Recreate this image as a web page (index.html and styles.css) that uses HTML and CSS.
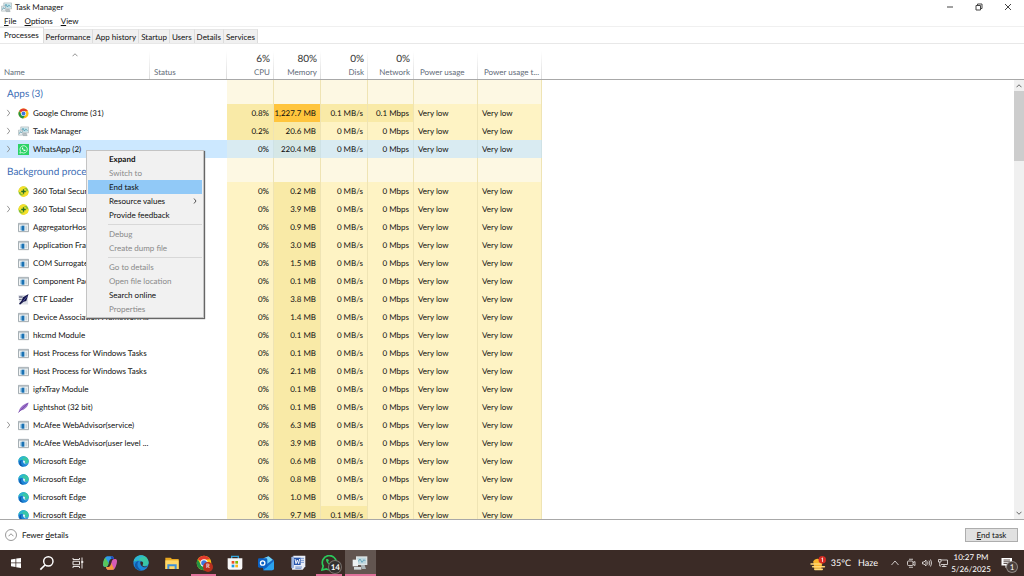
FILE: index.html
```
<!DOCTYPE html>
<html lang="en">
<head>
<meta charset="UTF-8">
<meta name="viewport" content="width=device-width, initial-scale=1.0">
<title>Task Manager</title>
<link rel="stylesheet" href="styles.css">
</head>
<body>

<!-- shared icons -->
<svg class="sprite" aria-hidden="true">
  <symbol id="chrome" viewBox="0 0 24 24">
    <circle cx="12" cy="12" r="11" fill="#fbc116"/>
    <path d="M12 12 2.5 6.500A11 11 0 0 1 21.500 6.500L12 7z" fill="#e33b2e"/>
    <path d="M2.500 6.500A11 11 0 0 0 11 23l5.500-8.500L12 12 7 14z" fill="#229342"/>
    <circle cx="12" cy="12" r="5.500" fill="#fff"/>
    <circle cx="12" cy="12" r="4.200" fill="#3c78e0"/>
  </symbol>
  <symbol id="taskmgr" viewBox="0 0 24 24">
    <path d="M6 2h17v13H6z" fill="#dfe9ec" stroke="#8b999e"/>
    <path d="M8 4h13v9H8z" fill="#c3e3ea"/>
    <path d="M8 10l3-5 3 6 3-4 4 3" fill="none" stroke="#3f8fa8" stroke-width="1.500"/>
    <path d="M1 9h9v11H1z" fill="#e9eef0" stroke="#8b999e"/>
    <path d="M3 17l2-5 2 3 2-3" fill="none" stroke="#4f95aa" stroke-width="1.500"/>
    <path d="M12 16h6l2 5h-9z" fill="#b7c1c4" stroke="#8b999e"/>
  </symbol>
  <symbol id="monitors" viewBox="0 0 24 24">
    <path d="M6 2h17v13H6z" fill="#dde3e5"/>
    <path d="M8 4h13v9H8z" fill="#bcd6de"/>
    <path d="M9 10l3-4 3 5 3-4 2 2" fill="none" stroke="#5b9fb5" stroke-width="1.300"/>
    <path d="M1 7h8v10H1z" fill="#eef1f2"/>
    <path d="M3 18h11v4H3z" fill="#d5dadc"/>
    <path d="M13 15h6l2 6h-6z" fill="#aab3b6"/>
  </symbol>
  <symbol id="wa" viewBox="0 0 24 24">
    <path d="M0 0h24v24H0z" fill="#2bd366"/>
    <path d="M4 20l1.300-4.400a8 8 0 1 1 3.100 3.100z" fill="none" stroke="#fff" stroke-width="1.600"/>
    <path d="M9 7.500c-2 2 3.500 9 7 7.500l.5-2-2.200-1.200-1.200 1.200c-1-.3-2-1.500-2.400-2.400l1-1.200L10.500 7.500z" fill="#fff"/>
  </symbol>
  <symbol id="s360" viewBox="0 0 24 24">
    <circle cx="12" cy="12" r="11" fill="#8cc22f"/>
    <path d="M2 7A11 11 0 0 1 20 4c-6-1-8 2-9 5s-5 5-10 4q0-3 1-6zM23 11a11 11 0 0 1-19 9c7 2 10-1 11-4s4-5 8-5z" fill="#f6e02a"/>
    <circle cx="12" cy="12" r="6.500" fill="#f6e02a"/>
    <path d="M10.500 7h3v3.500H17v3h-3.500V17h-3v-3.500H7v-3h3.500z" fill="#23702a"/>
  </symbol>
  <symbol id="app" viewBox="0 0 24 20">
    <path d="M1 1h22v18H1z" fill="#f2f5f6" stroke="#9aa3a8" stroke-width="2"/>
    <path d="M2 2h20v3H2z" fill="#c3ccd1"/>
    <path d="M5 7h4v9H5z" fill="#8cbfe0"/>
    <path d="M8 6h6v11H8z" fill="#1971b3"/>
    <path d="M16 7h4v9h-4z" fill="#c9d6dc"/>
  </symbol>
  <symbol id="ctf" viewBox="0 0 24 24">
    <path d="M1 2h17l4 4v17H3z" fill="#dcdfe6"/>
    <path d="M2 5h8v3H2zM2 11h6v2H2z" fill="#70748c"/>
    <path d="M23 0l-5 15-6 2-7 6-3-1 6-8 3-7z" fill="#15164a"/>
    <path d="M20 5l-9 11" stroke="#6d72c4" stroke-width="1.500"/>
  </symbol>
  <symbol id="feather" viewBox="0 0 24 24">
    <path d="M1 23C3 13 10 5 23 1c-1 9-8 16-18 18z" fill="#9a70c8"/>
    <path d="M1 23L21 3" stroke="#6a3fa0" stroke-width="1.500"/>
  </symbol>
  <symbol id="edge" viewBox="0 0 24 24">
    <circle cx="12" cy="12" r="11.500" fill="#1b86d8"/>
    <path d="M1 10C3-3 22-3 23.500 11c0 5-4 6-8 5.500-2-.5-1.500-1.500-.7-2.500C16 9 10 6 1 10z" fill="#3ac7a5"/>
    <path d="M1 10C3 1 13-1 18 3c-6-1-9 1-9 5-3-1-6 0-8 2z" fill="#2cb4d8"/>
    <path d="M9 9c-4 3-3 11 4 14-6 1-11-4-10-9 1-3 3-5 6-5z" fill="#125ba9"/>
    <path d="M11 10c4-1 5 2 3.800 4-1 1.500-.5 2.500 1.200 3 2 .5 4 .3 6-1-4 5-12 1-11-6z" fill="var(--gap, #eef9fb)"/>
  </symbol>
  <symbol id="right" viewBox="0 0 8 12">
    <path d="M2 1l4 5-4 5" fill="none" stroke="currentColor" stroke-width="1.400"/>
  </symbol>
  <symbol id="up" viewBox="0 0 12 8">
    <path d="M1 6.500l5-5 5 5" fill="none" stroke="currentColor" stroke-width="1.600"/>
  </symbol>
</svg>

<main class="window">
  <header class="titlebar">
    <svg class="title-icon"><use href="#taskmgr"/></svg>
    <h1>Task Manager</h1>
    <div class="window-buttons">
      <button aria-label="Minimize"><svg viewBox="0 0 8 8"><path d="M1 4h6"/></svg></button>
      <button aria-label="Restore"><svg viewBox="0 0 8 8"><path d="M1 2.500h4.500V7H1zM2.500 2.500V1H7v4.500H5.500"/></svg></button>
      <button aria-label="Close"><svg viewBox="0 0 8 8"><path d="M1 1l6 6M7 1L1 7"/></svg></button>
    </div>
  </header>

  <nav class="menubar">
    <button><u>F</u>ile</button>
    <button><u>O</u>ptions</button>
    <button><u>V</u>iew</button>
  </nav>

  <div class="tabs" role="tablist">
    <button class="tab active" role="tab" aria-selected="true">Processes</button>
    <button class="tab" role="tab">Performance</button>
    <button class="tab" role="tab">App history</button>
    <button class="tab" role="tab">Startup</button>
    <button class="tab" role="tab">Users</button>
    <button class="tab" role="tab">Details</button>
    <button class="tab" role="tab">Services</button>
  </div>

  <section class="content">
    <div class="table-area">
      <table>
        <colgroup>
          <col class="c-name"><col class="c-status">
          <col class="c-num"><col class="c-num"><col class="c-num"><col class="c-net">
          <col class="c-power"><col class="c-power"><col>
        </colgroup>
        <thead>
          <tr>
            <th class="name-head"><svg class="sort"><use href="#up"/></svg>Name</th>
            <th>Status</th>
            <th class="num"><b>6%</b>CPU</th>
            <th class="num"><b>80%</b>Memory</th>
            <th class="num"><b>0%</b>Disk</th>
            <th class="num"><b>0%</b>Network</th>
            <th class="power">Power usage</th>
            <th class="power">Power usage t...</th>
            <th class="rest"></th>
          </tr>
        </thead>
        <tbody id="rows"></tbody>
      </table>
    </div>
    <div class="scrollbar">
      <button aria-label="Scroll up"><svg><use href="#up"/></svg></button>
      <div class="thumb"></div>
      <button class="down" aria-label="Scroll down"><svg><use href="#up"/></svg></button>
    </div>
  </section>

  <footer class="footer">
    <button class="fewer"><span class="round"><svg><use href="#up"/></svg></span><span>Fewer <u>d</u>etails</span></button>
    <button class="end-task"><u>E</u>nd task</button>
  </footer>

  <div class="context-menu" role="menu">
    <button role="menuitem" class="default">Expand</button>
    <button role="menuitem" disabled>Switch to</button>
    <button role="menuitem" class="hover">End task</button>
    <button role="menuitem">Resource values<svg><use href="#right"/></svg></button>
    <button role="menuitem">Provide feedback</button>
    <hr>
    <button role="menuitem" disabled>Debug</button>
    <button role="menuitem" disabled>Create dump file</button>
    <hr>
    <button role="menuitem" disabled>Go to details</button>
    <button role="menuitem" disabled>Open file location</button>
    <button role="menuitem">Search online</button>
    <button role="menuitem" disabled>Properties</button>
  </div>
</main>

<div class="taskbar">
  <div class="system">
    <button aria-label="Start"><svg viewBox="0 0 24 24"><path d="M2 5l9-1.500V11H2zM12.500 3.200L22 2v9h-9.500zM2 12.500h9V20l-9-1.500zM12.500 12.500H22V22l-9.500-1.300z" fill="#fff"/></svg></button>
    <button aria-label="Search"><svg class="big" viewBox="0 0 24 24"><circle cx="14" cy="9.500" r="7" fill="none" stroke="#fff" stroke-width="2.200"/><path d="M9 15l-7 7" stroke="#fff" stroke-width="2.500"/></svg></button>
    <button aria-label="Task view"><svg viewBox="0 0 24 24" fill="none" stroke="#e8e4e2" stroke-width="2"><path d="M2 2v3h13V2M2 22v-3h13v3M2 8.500h13v7H2zM20 1v22"/><path d="M18.500 10h4" stroke-width="4"/></svg></button>
  </div>
  <div class="pinned">
    <button aria-label="Copilot"><svg class="big" viewBox="0 0 24 24">
      <path d="M8 2h7c2 0 2.500 2 3 4h-4c-2 0-3 2-4 6s-2 6-5 6c-4 0-4-3-3-7 2-6 3-9 6-9z" fill="#2f9be8"/>
      <path d="M2 11c0-3 2-6 3-7l5 8c-1 4-2 6-5 6-3 0-4-3-3-7z" fill="#58c65b"/>
      <path d="M16 22H9c-2 0-2.500-2-3-4h4c2 0 3-2 4-6s2-6 5-6c4 0 4 3 3 7-2 6-3 9-6 9z" fill="#d65bb5"/>
      <path d="M6 18h4c2 0 3-2 4-6l4 9c-1 1-2 1-3 1H9c-2 0-2.500-2-3-4z" fill="#f49a3c"/>
      <path d="M13 2h2c2 0 2.500 2 3 4h-4z" fill="#2445b8"/></svg></button>
    <button class="edge-pin" aria-label="Microsoft Edge"><svg class="big"><use href="#edge"/></svg></button>
    <button aria-label="File Explorer"><svg class="big" viewBox="0 0 24 24"><path d="M2 4h8l2 2h10v15H2z" fill="#e9a820"/><path d="M2 8h20v13H2z" fill="#ffd868"/><path d="M5 14h14v7h-3v-4H8v4H5z" fill="#3f90d8"/></svg></button>
    <button class="running" aria-label="Google Chrome"><svg class="big"><use href="#chrome"/></svg><span class="badge profile">R</span></button>
    <button aria-label="Microsoft Store"><svg class="big" viewBox="0 0 24 24"><path d="M7 6V2h10v4" fill="none" stroke="#35a6dc" stroke-width="2"/><path d="M1 5h22v14a3 3 0 0 1-3 3H4a3 3 0 0 1-3-3z" fill="#f7f7f7"/><path d="M7 9h4v4H7z" fill="#f05022"/><path d="M12.500 9h4v4h-4z" fill="#7fba00"/><path d="M7 14.500h4v4H7z" fill="#1b9de2"/><path d="M12.500 14.500h4v4h-4z" fill="#fdb813"/></svg></button>
    <button aria-label="Outlook"><svg class="big" viewBox="0 0 24 24"><path d="M5 8l10-6 9 6v12a3 3 0 0 1-3 3H8z" fill="#1668c4"/><path d="M8 5l8-3 6 5-9 7z" fill="#72d2f7"/><path d="M24 9v11a3 3 0 0 1-3 3H8z" fill="#2ba3ef"/><rect y="5" width="14" height="14" rx="2" fill="#0b62c4"/><circle cx="7" cy="12" r="3.300" fill="none" stroke="#fff" stroke-width="2"/></svg></button>
    <button aria-label="Word"><svg class="big" viewBox="0 0 24 24"><path d="M5 1h18v16l-4 5H3z" fill="#e9eef8"/><path d="M16 5h5M16 8h5M16 11h5M8 18h10M8 20h9" stroke="#5a80c4" stroke-width="1.200"/><path d="M2 3l4-1v17l-4 1z" fill="#9bb4e0"/><path d="M6 4h10v11H6z" fill="#2a57ad"/><path d="M7.500 6l1.500 7 2-5.500 2 5.500 1.500-7" fill="none" stroke="#fff" stroke-width="1.400"/></svg></button>
    <button class="running" aria-label="WhatsApp"><svg class="big" viewBox="0 0 24 24"><path d="M1.500 22.500l1.800-6A10.500 10.500 0 1 1 8 20.900z" fill="none" stroke="#2bc95c" stroke-width="2.500"/><path d="M8 6c-2.500 3 5 11.500 9.500 9.500l.5-2.500-3-1.500-1.500 1.500c-1.500-.5-2.600-1.800-3-3L12 8.500 10.500 6z" fill="#2bc95c"/></svg><span class="badge count">14</span></button>
    <button class="running current" aria-label="Task Manager"><svg class="big"><use href="#monitors"/></svg></button>
  </div>

  <div class="tray">
    <button class="weather">
      <svg viewBox="0 0 30 28"><path d="M6 10a9 9 0 0 1 17 4l-2 10H8z" fill="#f8b62d"/><path d="M2 15h18M5 20h22M9 25h14" stroke="#ffd877" stroke-width="3" stroke-linecap="round"/><circle cx="23" cy="7" r="7" fill="#d42b22"/><path d="M21.500 5l2-1.500V11" fill="none" stroke="#fff" stroke-width="1.500"/></svg>
      <span>35°C</span><span>Haze</span>
    </button>
    <button aria-label="Show hidden icons"><svg viewBox="0 0 20 20"><path d="M3 14l7-8 7 8"/></svg></button>
    <button aria-label="Meet now"><svg viewBox="0 0 20 20"><rect x="3" y="6" width="11" height="9" rx="2"/><path d="M14 9l4-2v8l-4-2M6 2.500h8M6 18.500h8"/></svg></button>
    <button aria-label="Volume"><svg viewBox="0 0 20 20"><path d="M1 8h3l4-4v12l-4-4H1zM11 7q2 3 0 6M14 5q3.500 5 0 10M17 3q5 7 0 14"/></svg></button>
    <button aria-label="Network"><svg viewBox="0 0 20 20"><path d="M6 4h13v9H6M12 13v4M8 17h9M1 3h5v5H1zM3.500 8v8h3"/></svg></button>
    <button class="clock"><span>10:27 PM</span><span>5/26/2025</span></button>
    <button class="notes" aria-label="Notifications"><svg viewBox="0 0 24 24"><path d="M1 2h21v15h-8l-5 5v-5H1z" fill="#fff" stroke="none"/><path d="M5 6h13M5 9.500h13M5 13h8" stroke="#3a2a25"/></svg><span class="badge note-count">1</span></button>
  </div>
</div>

<script>
  // icon, name, cpu, memory, disk, network, expandable
  const apps = [
    ['chrome', 'Google Chrome (31)', '0.8%', '1,227.7 MB', '0.1 MB/s', '0.1 Mbps', true],
    ['taskmgr', 'Task Manager', '0.2%', '20.6 MB', '0 MB/s', '0 Mbps', true],
    ['wa', 'WhatsApp (2)', '0%', '220.4 MB', '0 MB/s', '0 Mbps', true]
  ];
  const background = [
    ['s360', '360 Total Security', '0%', '0.2 MB', '0 MB/s', '0 Mbps'],
    ['s360', '360 Total Security', '0%', '3.9 MB', '0 MB/s', '0 Mbps', true],
    ['app', 'AggregatorHost', '0%', '0.9 MB', '0 MB/s', '0 Mbps'],
    ['app', 'Application Frame Host', '0%', '3.0 MB', '0 MB/s', '0 Mbps'],
    ['app', 'COM Surrogate', '0%', '1.5 MB', '0 MB/s', '0 Mbps'],
    ['app', 'Component Package', '0%', '0.1 MB', '0 MB/s', '0 Mbps'],
    ['ctf', 'CTF Loader', '0%', '3.8 MB', '0 MB/s', '0 Mbps'],
    ['app', 'Device Association Framework ...', '0%', '1.4 MB', '0 MB/s', '0 Mbps'],
    ['app', 'hkcmd Module', '0%', '0.1 MB', '0 MB/s', '0 Mbps'],
    ['app', 'Host Process for Windows Tasks', '0%', '0.1 MB', '0 MB/s', '0 Mbps'],
    ['app', 'Host Process for Windows Tasks', '0%', '2.1 MB', '0 MB/s', '0 Mbps'],
    ['app', 'igfxTray Module', '0%', '0.1 MB', '0 MB/s', '0 Mbps'],
    ['feather', 'Lightshot (32 bit)', '0%', '0.1 MB', '0 MB/s', '0 Mbps'],
    ['app', 'McAfee WebAdvisor(service)', '0%', '6.3 MB', '0 MB/s', '0 Mbps', true],
    ['app', 'McAfee WebAdvisor(user level ...', '0%', '3.9 MB', '0 MB/s', '0 Mbps'],
    ['edge', 'Microsoft Edge', '0%', '0.6 MB', '0 MB/s', '0 Mbps'],
    ['edge', 'Microsoft Edge', '0%', '0.8 MB', '0 MB/s', '0 Mbps'],
    ['edge', 'Microsoft Edge', '0%', '1.0 MB', '0 MB/s', '0 Mbps'],
    ['edge', 'Microsoft Edge', '0%', '9.7 MB', '0.1 MB/s', '0 Mbps']
  ];

  // busier cells get a darker yellow
  function heat(value) {
    const n = parseFloat(value.replace(',', ''));
    if (n > 1000) return 'high';
    return n > 0 ? 'mid' : 'low';
  }

  function groupRow(title) {
    return `<tr class="group"><th colspan="2">${title}</th>${'<td class="heat"></td>'.repeat(6)}<td></td></tr>`;
  }

  function processRow(p) {
    const arrow = p[6] ? '<svg><use href="#right"/></svg>' : '';
    const nums = p.slice(2, 6).map(v => `<td class="heat num ${heat(v)}">${v}</td>`).join('');
    const power = '<td class="heat low power">Very low</td>'.repeat(2);
    return `<tr class="${p[0] === 'wa' ? 'selected' : ''}">
      <td><div class="process"><span class="arrow">${arrow}</span><svg class="icon"><use href="#${p[0]}"/></svg><span class="label">${p[1]}</span></div></td>
      <td></td>${nums}${power}<td class="rest"></td></tr>`;
  }

  document.getElementById('rows').innerHTML =
    groupRow('Apps (3)') + apps.map(processRow).join('') +
    groupRow('Background processes') + background.map(processRow).join('');
</script>
</body>
</html>
```
FILE: styles.css
```
* {
    box-sizing: border-box;
}
body {
    margin: 0;
    height: 100vh;
    display: flex;
    flex-direction: column;
    overflow: hidden;
    background-color: white;
    color: #111;
    font-family: Lato, "Noto Sans", sans-serif;
    font-size: 8px;
    line-height: 12px;
    text-rendering: geometricPrecision;
}
button {
    font: inherit;
    color: inherit;
    text-rendering: inherit;
    background: none;
    border: 0;
    padding: 0;
}
svg {
    display: block;
    flex-shrink: 0;
}
.sprite {
    position: absolute;
    width: 0;
    height: 0;
}

.window {
    position: relative;
    flex: 1;
    min-height: 0;
    display: flex;
    flex-direction: column;
}
.titlebar {
    display: flex;
    align-items: center;
    height: 14px;
    padding-left: 1px;
}
.titlebar h1 {
    margin: 0 0 0 3px;
    font-size: 8px;
    font-weight: normal;
}
.title-icon {
    width: 11px;
    height: 11px;
}
.window-buttons {
    display: flex;
    margin: 0 2px 0 auto;
}
.window-buttons button {
    width: 29px;
    height: 14px;
    display: grid;
    place-items: center;
}
.window-buttons svg {
    width: 8px;
    height: 8px;
    fill: none;
    stroke: #444;
    stroke-width: 1;
}
.menubar {
    display: flex;
    gap: 8px;
    height: 13px;
    padding: 1px 0 0 4px;
    border-bottom: 1px solid #f0f0f0;
}
.tabs {
    display: flex;
    align-items: flex-end;
    height: 17px;
    border-bottom: 1px solid #e8e8e8;
}
.tab {
    height: 14px;
    padding: 0 2px;
    background-color: #f0f0f0;
    border-right: 1px solid #dcdcdc;
    border-top: 1px solid #e6e6e6;
}
.tab.active {
    height: 16px;
    padding: 0 4px 2px;
    background-color: white;
}

.content {
    flex: 1;
    min-height: 0;
    display: flex;
    border-bottom: 1px solid #a8a8a8;
}
.table-area {
    flex: 1;
    overflow: hidden;
}
table {
    width: 100%;
    table-layout: fixed;
    border-collapse: separate;
    border-spacing: 0;
}
.c-name { width: 150px; }
.c-status { width: 77px; }
.c-num { width: 47px; }
.c-net { width: 46px; }
.c-power { width: 64px; }

td, th {
    padding: 0;
    font-weight: normal;
    text-align: left;
    white-space: nowrap;
}
thead th {
    height: 36px;
    padding: 0 4px 1px;
    vertical-align: bottom;
    color: #5f6b78;
    background: linear-gradient(#fff, #dcdcdc) right bottom / 1px 28px no-repeat;
    border-bottom: 1px solid #a8a8a8;
}
thead th.rest {
    background: none;
}
thead b {
    display: block;
    font-size: 10px;
    line-height: 14px;
    font-weight: normal;
    color: #333;
}
thead .power {
    padding-left: 6px;
    padding-right: 0;
}
.sort {
    width: 6px;
    height: 4px;
    margin: 0 auto 9px;
    color: #777;
}
.num {
    text-align: right;
    padding-right: 4px;
}
tbody tr {
    height: 18px;
}
tbody .group {
    height: 24px;
}
.group th {
    padding: 4px 0 0 7px;
    font-size: 10px;
    color: #3c6db5;
}
.heat {
    background-color: #fdf8e3;
    border-right: 1px solid #efe4b4;
}
.low { background-color: #fef3c4; }
.mid { background-color: #f9eaa7; }
.high { background-color: #ffc53d; }
td.power {
    padding-left: 4px;
}
.selected td {
    background-color: #cce8ff;
}
.selected .heat {
    background-color: #d9ebf2;
    border-right-color: #cfe2e6;
}
.selected .mid {
    background-color: #d5e7e6;
}
.selected .rest {
    background-color: white;
}
.process {
    display: flex;
    align-items: center;
    height: 18px;
}
.arrow {
    flex-shrink: 0;
    width: 18px;
    padding-left: 6px;
    color: #888;
}
.arrow svg {
    width: 5px;
    height: 8px;
}
.icon {
    width: 11px;
    height: 11px;
    margin-right: 4px;
}

.scrollbar {
    width: 10px;
    margin-top: 35px;
    display: flex;
    flex-direction: column;
    background-color: #f0f0f0;
    border-top: 1px solid #a8a8a8;
}
.scrollbar button {
    height: 11px;
    display: grid;
    place-items: center;
    color: #444;
}
.scrollbar svg {
    width: 6px;
    height: 4px;
}
.thumb {
    height: 70px;
    background-color: #cdcdcd;
}
.scrollbar .down {
    margin-top: auto;
    transform: rotate(180deg);
}

.footer {
    height: 30px;
    display: flex;
    align-items: center;
    justify-content: space-between;
    padding: 0 6px 0 5px;
}
.fewer {
    display: flex;
    align-items: center;
    gap: 5px;
}
.round {
    width: 12px;
    height: 12px;
    display: grid;
    place-items: center;
    border: 1px solid #999;
    border-radius: 50%;
    color: #777;
}
.round svg {
    width: 6px;
    height: 4px;
}
.end-task {
    width: 53px;
    height: 14px;
    line-height: 12px;
    background-color: #e1e1e1;
    border: 1px solid #adadad;
}

.context-menu {
    position: absolute;
    left: 86px;
    top: 150px;
    width: 118px;
    padding: 1px;
    background-color: #f1f1f1;
    border: 1px solid #c4c4c4;
    box-shadow: 1px 1px 1px #666;
}
.context-menu button {
    display: flex;
    align-items: center;
    justify-content: space-between;
    width: 100%;
    height: 14px;
    padding: 0 5px 0 21px;
}
.context-menu button:disabled {
    color: #8a8a8a;
}
.context-menu .default {
    font-weight: bold;
}
.context-menu .hover {
    background-color: #91c9f7;
}
.context-menu svg {
    width: 4px;
    height: 6px;
}
.context-menu hr {
    margin: 2px 0 2px 20px;
    border: 0;
    border-top: 1px solid #d8d8d8;
}

.taskbar {
    height: 26px;
    display: flex;
    background-color: #3b2b26;
    color: white;
}
.taskbar button {
    position: relative;
    display: grid;
    place-items: center;
}
.system {
    display: grid;
    grid-template-columns: repeat(3, 31px);
    margin-right: 1px;
}
.pinned {
    display: grid;
    grid-template-columns: repeat(9, 1fr);
    width: 282px;
}
.edge-pin {
    --gap: #3b2b26;
}
.taskbar svg {
    width: 12px;
    height: 12px;
}
.taskbar .big {
    width: 16px;
    height: 16px;
}
.running::after {
    content: "";
    position: absolute;
    left: 3px;
    right: 3px;
    bottom: 0;
    height: 2px;
    background-color: #e0709a;
}
.current {
    background-color: #625550;
}
.current::after {
    left: 0;
    right: 0;
}
.badge {
    position: absolute;
    border-radius: 50%;
    text-align: center;
}
.profile {
    left: 15px;
    top: 12px;
    width: 10px;
    height: 10px;
    font-size: 6px;
    line-height: 10px;
    background-color: #b8301f;
}
.count {
    left: 16px;
    top: 11px;
    width: 12px;
    height: 12px;
    font-weight: bold;
    background-color: #33302e;
    box-shadow: 0 0 0 1px #77706c;
}
.tray {
    display: flex;
    margin-left: auto;
    padding-right: 2px;
}
.tray button {
    width: 16px;
}
.tray svg {
    width: 10px;
    height: 10px;
    fill: none;
    stroke: #f0eeec;
    stroke-width: 1.6;
}
.tray .weather {
    width: auto;
    display: flex;
    align-items: center;
    gap: 7px;
    margin-right: 9px;
    font-size: 9px;
}
.tray .weather svg {
    width: 16px;
    height: 15px;
    margin-right: -2px;
    stroke: none;
}
.tray .clock {
    width: 40px;
    align-content: center;
}
.tray .notes {
    width: 31px;
}
.tray .notes svg {
    width: 12px;
    height: 12px;
}
.note-count {
    left: 16px;
    top: 12px;
    width: 10px;
    height: 10px;
    line-height: 10px;
    background-color: #4b403c;
    box-shadow: 0 0 0 1px #8d8581;
}
```
